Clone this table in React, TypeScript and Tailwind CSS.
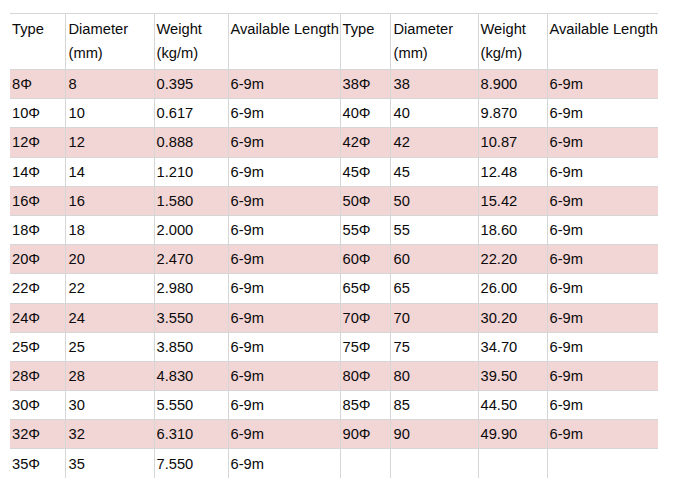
import React from "react";

const left = [
  ["8Φ", "8", "0.395"],
  ["10Φ", "10", "0.617"],
  ["12Φ", "12", "0.888"],
  ["14Φ", "14", "1.210"],
  ["16Φ", "16", "1.580"],
  ["18Φ", "18", "2.000"],
  ["20Φ", "20", "2.470"],
  ["22Φ", "22", "2.980"],
  ["24Φ", "24", "3.550"],
  ["25Φ", "25", "3.850"],
  ["28Φ", "28", "4.830"],
  ["30Φ", "30", "5.550"],
  ["32Φ", "32", "6.310"],
  ["35Φ", "35", "7.550"],
];

const right = [
  ["38Φ", "38", "8.900"],
  ["40Φ", "40", "9.870"],
  ["42Φ", "42", "10.87"],
  ["45Φ", "45", "12.48"],
  ["50Φ", "50", "15.42"],
  ["55Φ", "55", "18.60"],
  ["60Φ", "60", "22.20"],
  ["65Φ", "65", "26.00"],
  ["70Φ", "70", "30.20"],
  ["75Φ", "75", "34.70"],
  ["80Φ", "80", "39.50"],
  ["85Φ", "85", "44.50"],
  ["90Φ", "90", "49.90"],
];

const cell = "border-t border-[#d6d6d6] pl-[2px] align-middle";
const sep = "border-l border-[#d6d6d6]";

export default function App() {
  return (
    <div
      className="w-[676px] h-[495px] bg-white pl-[10px] pt-[13px] text-[#0a0a0a] text-[14.7px] leading-[24px]"
      style={{ fontFamily: '"Liberation Sans", Arial, sans-serif' }}
    >
      <table className="table-fixed border-collapse w-[648px]">
        <colgroup>
          <col className="w-[55px]" />
          <col className="w-[89px]" />
          <col className="w-[74px]" />
          <col className="w-[112px]" />
          <col className="w-[50px]" />
          <col className="w-[88px]" />
          <col className="w-[69px]" />
          <col className="w-[111px]" />
        </colgroup>
        <tbody>
          <tr className="h-[56px]">
            {[0, 1].map((h) => (
              <React.Fragment key={h}>
                <td className={`${cell} ${h ? sep : ""} align-top pt-[3px]`}>Type</td>
                <td className={`${cell} ${sep} align-top pt-[3px] pl-[3px]`}>
                  Diameter
                  <br />
                  (mm)
                </td>
                <td className={`${cell} ${sep} align-top pt-[3px]`}>
                  Weight
                  <br />
                  (kg/m)
                </td>
                <td className={`${cell} ${sep} align-top pt-[3px] whitespace-nowrap`}>
                  Available Length
                </td>
              </React.Fragment>
            ))}
          </tr>
          {left.map((l, i) => {
            const r = right[i];
            const pink = i % 2 === 0;
            return (
              <tr key={l[0]} className={`h-[29.2px] ${pink ? "bg-[#f2d5d5]" : ""}`}>
                <td className={cell}>{l[0]}</td>
                <td className={`${cell} ${sep} pl-[3px]`}>{l[1]}</td>
                <td className={`${cell} ${sep}`}>{l[2]}</td>
                <td className={`${cell} ${sep}`}>6-9m</td>
                <td className={`${cell} ${sep}`}>{r ? r[0] : ""}</td>
                <td className={`${cell} ${sep} pl-[3px]`}>{r ? r[1] : ""}</td>
                <td className={`${cell} ${sep}`}>{r ? r[2] : ""}</td>
                <td className={`${cell} ${sep}`}>{r ? "6-9m" : ""}</td>
              </tr>
            );
          })}
        </tbody>
      </table>
    </div>
  );
}
